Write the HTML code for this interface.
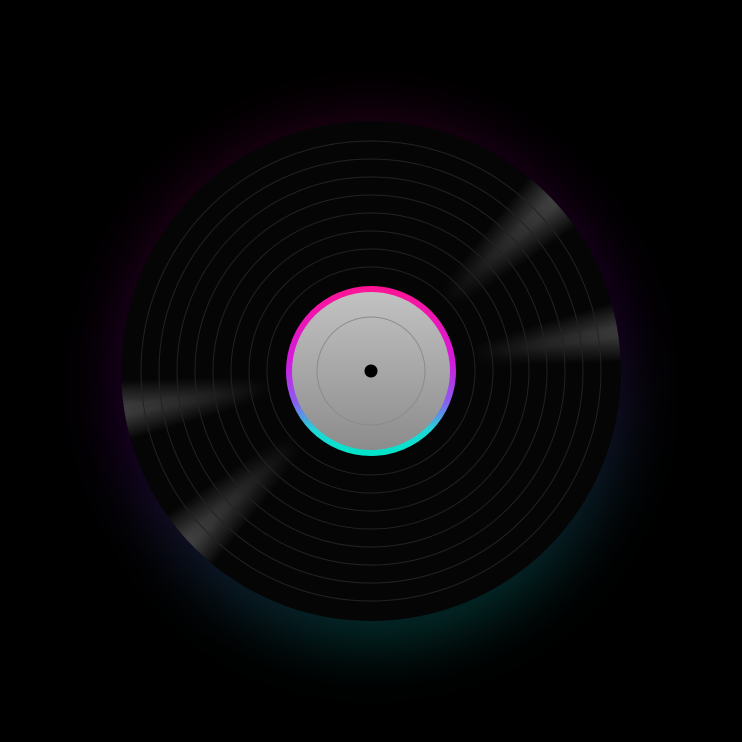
<!DOCTYPE html>
<html><head><style>
html,body{margin:0;padding:0;background:#000;width:742px;height:742px;overflow:hidden}
.glow{position:absolute;left:111px;top:116px;width:520px;height:530px;border-radius:50%;
background:linear-gradient(165deg,rgba(90,0,45,.45) 0%,rgba(60,0,90,.45) 50%,rgba(0,90,80,.55) 90%);filter:blur(28px)}
.rec{position:absolute;left:121px;top:121px;width:500px;height:500px;border-radius:50%;background:#050505;overflow:hidden}
.sheen{position:absolute;inset:0;border-radius:50%;
background:conic-gradient(from 0deg,transparent 0deg,transparent 39deg,rgba(255,255,255,.38) 46deg,rgba(255,255,255,.38) 48deg,transparent 55deg,transparent 74deg,rgba(255,255,255,.34) 80deg,rgba(255,255,255,.34) 82deg,transparent 88deg,transparent 219deg,rgba(255,255,255,.38) 226deg,rgba(255,255,255,.38) 228deg,transparent 235deg,transparent 254deg,rgba(255,255,255,.36) 260deg,rgba(255,255,255,.36) 262deg,transparent 268deg,transparent 360deg);
-webkit-mask:radial-gradient(circle,transparent 28%,rgba(0,0,0,.35) 50%,#000 100%);mask:radial-gradient(circle,transparent 28%,rgba(0,0,0,.35) 50%,#000 100%)}
svg{position:absolute;left:0;top:0}
</style></head><body>
<div class="glow"></div>
<div class="rec"><div class="sheen"></div></div>
<svg width="742" height="742">
<defs>
<linearGradient id="ring" x1="0" y1="0" x2="0" y2="1">
<stop offset="0" stop-color="#ff1493"/><stop offset=".45" stop-color="#d21ae0"/><stop offset=".68" stop-color="#8a5cf0"/><stop offset=".85" stop-color="#1fd8d8"/><stop offset="1" stop-color="#00e5c8"/></linearGradient>
<linearGradient id="lab" x1="0" y1="0" x2="0" y2="1"><stop offset="0" stop-color="#c2c2c2"/><stop offset="1" stop-color="#8c8c8c"/></linearGradient>
</defs>
<g fill="none" stroke="#222" stroke-width="1">
<circle cx="371" cy="371" r="104"/><circle cx="371" cy="371" r="122"/><circle cx="371" cy="371" r="140"/><circle cx="371" cy="371" r="158"/><circle cx="371" cy="371" r="176"/><circle cx="371" cy="371" r="194"/><circle cx="371" cy="371" r="212"/><circle cx="371" cy="371" r="230"/>
</g>
<circle cx="371" cy="371" r="85" fill="url(#ring)"/>
<circle cx="371" cy="371" r="79" fill="url(#lab)"/>
<circle cx="371" cy="371" r="54" fill="none" stroke="#8a8a8a" stroke-width="1"/>
<circle cx="371" cy="371" r="6.5" fill="#000"/>
</svg>
</body></html>
